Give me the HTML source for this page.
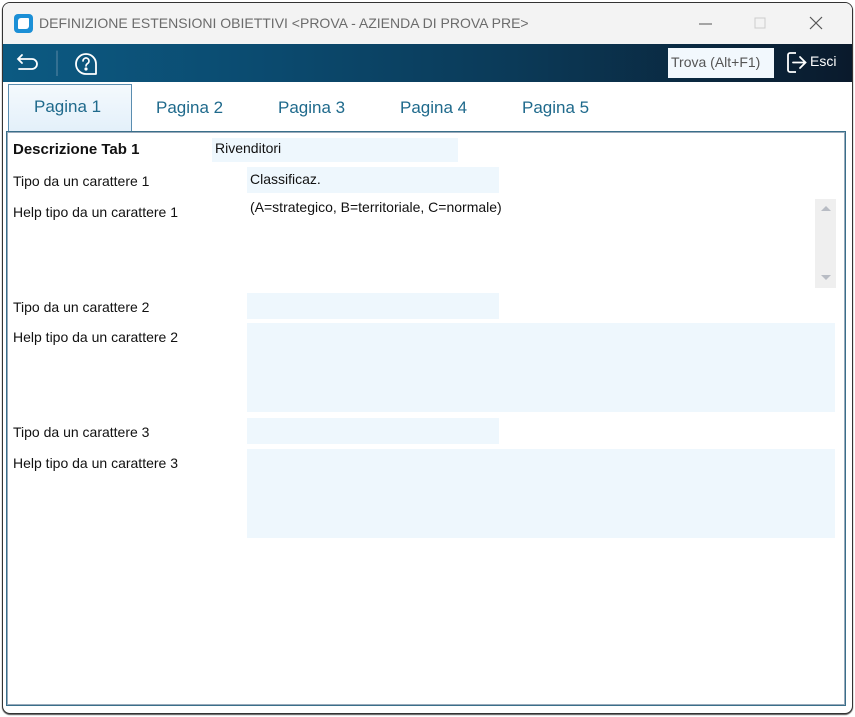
<!DOCTYPE html>
<html><head><meta charset="utf-8"><style>
*{margin:0;padding:0;box-sizing:border-box}
body{width:855px;height:717px;background:#fff;font-family:"Liberation Sans",sans-serif;position:relative;overflow:hidden}
.win{position:absolute;left:2px;top:2px;width:851px;height:712px;border:1px solid #333;border-radius:8px;background:#fff;overflow:hidden;box-shadow:0 1px 1px #555}
.title{position:absolute;left:0;top:0;width:100%;height:41px;background:#f3f3f3}
.title .t{position:absolute;left:36px;top:12px;font-size:14px;color:#6b6b6b;letter-spacing:0}
.ico{position:absolute;left:11px;top:11px;width:19px;height:19px;border-radius:4px;background:#1b8fd6}
.ico:after{content:"";position:absolute;left:4px;top:4px;width:11px;height:11px;border-radius:3px 1px 3px 1px;background:#fff}
.tb{position:absolute;left:0;top:41px;width:100%;height:38px;background:linear-gradient(90deg,#0c5a82 0%,#0b4b70 30%,#0b3a58 60%,#0a1a2c 100%)}
.trova{position:absolute;left:665px;top:4px;width:106px;height:30px;background:#f2f8fd;font-size:14px;color:#555;padding:6px 0 0 3px}
.esci{position:absolute;left:807px;top:9px;color:#fff;font-size:14px}
.tab{position:absolute;font-size:17px;color:#1f6a8c}
.act{position:absolute;left:5px;top:81px;width:124px;height:48px;border:1px solid #5a8db0;border-bottom:none;background:linear-gradient(#f4f9fd,#e3f0fa)}
.panel{position:absolute;left:3px;top:128px;width:840px;height:575px;border:1px solid #3a6f8a;box-shadow:inset 0 0 0 1px #9ab}
.lbl{position:absolute;left:10px;font-size:14px;color:#111}
.fld{position:absolute;background:#eef7fd;font-size:14px;color:#111;padding:2px 0 0 3px}
</style></head><body>
<div class="win">
<div class="title"><div class="ico"></div><div class="t">DEFINIZIONE ESTENSIONI OBIETTIVI &lt;PROVA - AZIENDA DI PROVA PRE&gt;</div>
<svg style="position:absolute;left:696px;top:12px" width="130" height="20"><line x1="0" y1="9" x2="13" y2="9" stroke="#555" stroke-width="1"/><rect x="56" y="3" width="10" height="10" fill="none" stroke="#ccc"/><path d="M111 2L123 14M123 2L111 14" stroke="#555" stroke-width="1.2"/></svg></div>
<div class="tb">
<svg style="position:absolute;left:12px;top:6px" width="90" height="26" fill="none" stroke="#fff" stroke-width="1.8" stroke-linecap="round"><path d="M7 5L3 9L7 13M3 9H17a5 5 0 0 1 0 10H4"/><line x1="42" y1="1" x2="42" y2="26" stroke="#5d8aa5" stroke-width="1"/><path d="M71 24H81V14A10 10 0 1 0 71 24z" stroke-linejoin="round"/><path d="M68 11a3 3 0 1 1 4.5 2.6q-1.5 1-1.5 2.4" stroke-width="1.6"/><circle cx="71" cy="19" r=".7" fill="#fff"/></svg>
<div class="trova">Trova (Alt+F1)</div>
<svg style="position:absolute;left:783px;top:7px" width="24" height="24" fill="none" stroke="#fff" stroke-width="1.8"><path d="M10 2H4a2 2 0 0 0-2 2v15a2 2 0 0 0 2 2h6"/><path d="M7 11.5H19M14 6l5.5 5.5L14 17" stroke-linecap="round"/></svg>
<div class="esci">Esci</div></div>
<div class="act"></div>
<div class="tab" style="left:31px;top:94px">Pagina 1</div>
<div class="tab" style="left:153px;top:95px">Pagina 2</div>
<div class="tab" style="left:275px;top:95px">Pagina 3</div>
<div class="tab" style="left:397px;top:95px">Pagina 4</div>
<div class="tab" style="left:519px;top:95px">Pagina 5</div>
<div class="panel"></div>
<div class="lbl" style="top:138px;font-weight:bold;font-size:15px">Descrizione Tab 1</div>
<div class="fld" style="left:209px;top:135px;width:246px;height:24px">Rivenditori</div>
<div class="lbl" style="top:170px">Tipo da un carattere 1</div>
<div class="fld" style="left:244px;top:164px;width:252px;height:26px;padding-top:4px">Classificaz.</div>
<div class="lbl" style="top:201px">Help tipo da un carattere 1</div>
<div style="position:absolute;left:247px;top:196px;font-size:14px;color:#111">(A=strategico, B=territoriale, C=normale)</div>
<div style="position:absolute;left:812px;top:196px;width:21px;height:89px;background:#efefef"></div>
<svg style="position:absolute;left:816px;top:200px" width="14" height="82" fill="#b8bcc4"><path d="M2 8L7 3L12 8z"/><path d="M2 72L7 77L12 72z"/></svg>
<div class="lbl" style="top:296px">Tipo da un carattere 2</div>
<div class="fld" style="left:244px;top:290px;width:252px;height:26px"></div>
<div class="lbl" style="top:326px">Help tipo da un carattere 2</div>
<div class="fld" style="left:244px;top:320px;width:588px;height:89px"></div>
<div class="lbl" style="top:421px">Tipo da un carattere 3</div>
<div class="fld" style="left:244px;top:415px;width:252px;height:26px"></div>
<div class="lbl" style="top:452px">Help tipo da un carattere 3</div>
<div class="fld" style="left:244px;top:446px;width:588px;height:89px"></div>
</div>
</body></html>
